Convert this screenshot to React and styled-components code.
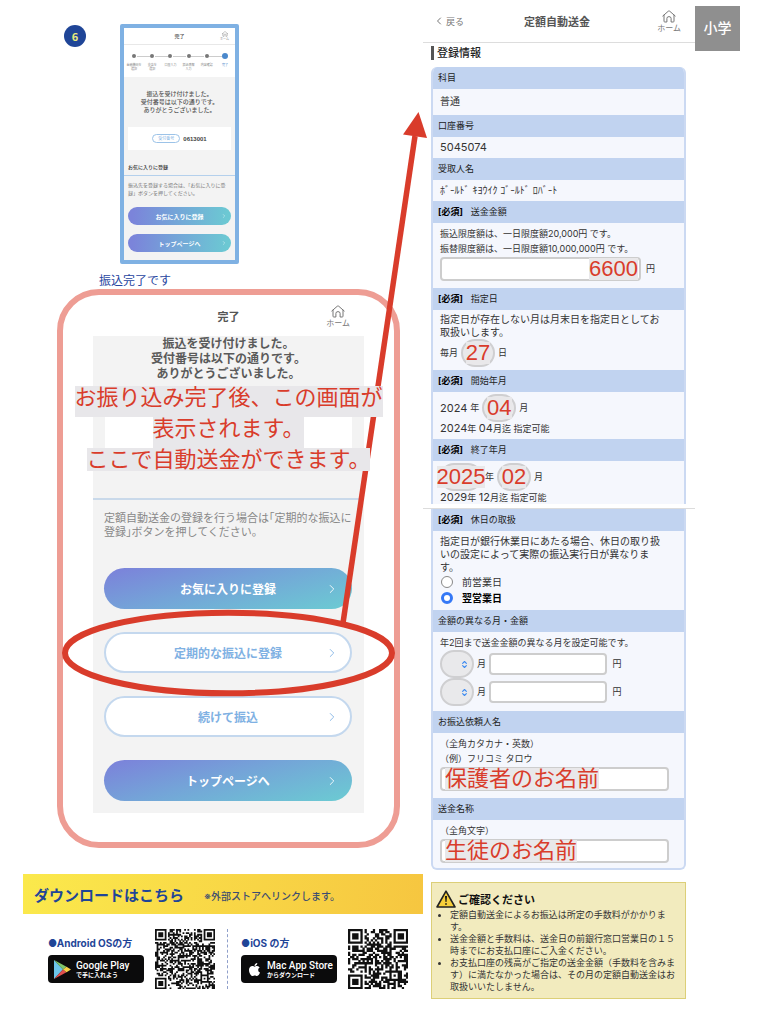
import React from 'react';
import styled, { createGlobalStyle, css } from 'styled-components';
import { ChevronRight, ChevronLeft, ChevronsUpDown } from 'lucide-react';
import { FaApple } from 'react-icons/fa';

const red = '#d93c2b';
const sky = '#7fb1e3';
const navy = '#1f4597';
const jp = '"Noto Sans CJK JP", sans-serif';

const GlobalStyle = createGlobalStyle`
  * {
    box-sizing: border-box;
  }

  body {
    margin: 0;
    background: #fff;
    color: #333;
    font-family: "Inter", ${jp};
  }

  h1, h2, h3, p, ul {
    margin: 0;
    padding: 0;
    font-weight: normal;
  }

  button, input, select {
    font: inherit;
    margin: 0;
  }
`;

const Page = styled.main`
  position: relative;
  display: grid;
  grid-template-columns: minmax(0, 423fr) minmax(0, 345fr);
  align-items: start;
  min-height: 100vh;
`;

const Arrow = styled.svg`
  position: absolute;
  top: 0;
  left: 0;
  width: 100%;
  height: 1024px;
  pointer-events: none;
`;

const Home = styled.a`
  display: flex;
  flex-direction: column;
  align-items: center;
  justify-self: end;
  color: #777;
  font-size: ${props => props.$tiny ? 3 : 8}px;
  line-height: ${props => props.$tiny ? 4 : 10}px;
  text-decoration: none;

  svg {
    width: ${props => props.$tiny ? 6 : 14}px;
    height: ${props => props.$tiny ? 6 : 13}px;
  }
`;

const HomeLink = ({ tiny }) => (
  <Home href="#home" $tiny={tiny}>
    <svg viewBox="0 0 14 13" fill="none" stroke="currentColor" strokeWidth="1" strokeLinejoin="round" strokeLinecap="round">
      <path d="M.8 6 6.3 1.2Q7 .7 7.7 1.2L13.2 6M2 5.2V11.2Q2 12 2.8 12H4.9V8.4Q4.9 6.6 7 6.6T9.1 8.4V12H11.2Q12 12 12 11.2V5.2" />
    </svg>
    ホーム
  </Home>
);

/* ---- left column ---- */

const Left = styled.div`
  min-width: 0;
  padding-top: 24px;
`;

const StepRow = styled.div`
  display: flex;
  align-items: flex-start;
  gap: 34px;
  padding-left: 64px;
`;

const StepBadge = styled.span`
  width: 22px;
  height: 22px;
  margin-top: 1px;
  border-radius: 50%;
  background: ${navy};
  color: #e9ec7c;
  font: bold 11px/22px ${jp};
  text-align: center;
`;

const MiniPhone = styled.section`
  width: 119px;
  height: 240px;
  border: 4px solid ${sky};
  border-radius: 2px;
  background: #f3f3f3;
`;

const MiniHeader = styled.header`
  display: grid;
  grid-template-columns: 1fr auto 1fr;
  align-items: center;
  height: 17px;
  padding: 0 6px;
  border-bottom: 1px solid #e8e8e8;
  background: #fff;
  font-size: 5px;
  line-height: 6px;

  h2 {
    grid-column: 2;
    color: #555;
    font-size: 5px;
    font-weight: 500;
  }
`;

const MiniSteps = styled.ol`
  display: grid;
  grid-template-columns: repeat(6, 1fr);
  height: 32px;
  margin: 0;
  padding: 8px 1px 0;
  background: #fff;
  list-style: none;
`;

const MiniStep = styled.li`
  position: relative;
  color: ${props => props.$active ? '#4a88cc' : '#888'};
  font-size: 3px;
  line-height: 4px;
  text-align: center;
  white-space: pre-line;

  &::before {
    content: '';
    display: block;
    width: ${props => props.$active ? 6 : 4}px;
    height: ${props => props.$active ? 6 : 4}px;
    margin: ${props => props.$active ? '0 auto 4px' : '1px auto 5px'};
    border-radius: 50%;
    background: ${props => props.$active ? '#4a88cc' : '#777'};
  }

  &:not(:last-child)::after {
    content: '';
    position: absolute;
    top: 3px;
    left: 65%;
    width: 70%;
    border-top: 1px solid #ccc;
  }
`;

const MiniMessage = styled.p`
  padding: 13px 0;
  color: #555;
  font-size: 6px;
  font-weight: 500;
  line-height: 8px;
  text-align: center;
`;

const MiniNumber = styled.div`
  display: flex;
  align-items: center;
  justify-content: center;
  gap: 3px;
  height: 23px;
  margin: 0 4px;
  background: #fff;
  color: #444;
  font: bold 6px "Liberation Sans", sans-serif;

  span {
    width: 28px;
    border: 1px solid #9cc3e8;
    border-radius: 5px;
    color: ${sky};
    font: 4px/7px ${jp};
    text-align: center;
  }
`;

const MiniTitle = styled.h3`
  padding: 13px 4px 4px;
  border-bottom: 1px solid #b4d0ec;
  font-size: 5px;
  font-weight: 500;
  line-height: 8px;
`;

const MiniText = styled.p`
  padding: 5px 4px 10px;
  color: #777;
  font-size: 5px;
  line-height: 8px;
`;

const MiniButtons = styled.div`
  display: grid;
  gap: 9px;
  padding: 0 4px;
`;

const Caption = styled.p`
  padding: 8px 0 0 99px;
  color: #2745a0;
  font-size: 12px;
  line-height: 17px;
`;

const Frame = styled.section`
  margin: 0 23px 0 57px;
  padding: 0 30px 29px;
  border: 6px solid #ee9d94;
  border-radius: 42px;
`;

const FrameHeader = styled.header`
  display: grid;
  grid-template-columns: 1fr auto 1fr;
  align-items: center;
  height: 41px;
  padding: 2px 14px 0;

  h2 {
    grid-column: 2;
    color: #555;
    font-size: 11px;
    font-weight: bold;
    line-height: 20px;
  }
`;

const Screen = styled.div`
  position: relative;
  padding-bottom: 12px;
  background: #f3f3f3;
`;

const Message = styled.p`
  color: #5a5a5a;
  font-size: 12px;
  font-weight: bold;
  line-height: 15px;
  text-align: center;
`;

const NumberBox = styled.div`
  height: 47px;
  margin: 20px 12px 50px;
  background: #fff;
`;

// handwritten style remarks that sit on top of the screen
const Remark = styled.p`
  position: absolute;
  z-index: 2;
  top: 50px;
  left: 50%;
  width: max-content;
  transform: translateX(-50%);
  color: ${red};
  font-size: 22px;
  line-height: 23px;
  text-align: center;

  span {
    display: table;
    margin: 0 auto;
    padding-bottom: 8px;
    background: #e8e7ea;
  }

  span:last-child {
    padding-bottom: 0;
  }
`;

const Help = styled.p`
  padding: 11px 0 29px 11px;
  border-top: 2px solid #c9d9ea;
  color: #888;
  font-size: 11px;
  line-height: 14px;
  font-feature-settings: 'halt';
`;

const ButtonStack = styled.div`
  display: grid;
  gap: 23px;
  padding: 0 12px 0 11px;
`;

const PillButton = styled.button`
  display: flex;
  align-items: center;
  justify-content: center;
  position: relative;
  width: 100%;
  height: ${props => props.$mini ? 18 : 41}px;
  padding: 0;
  border: 0;
  border-radius: 21px;
  background: linear-gradient(${props => props.$mini ? '95deg' : '165deg'}, #7b84da 5%, #74a4d8 45%, #6cc8d3 95%);
  color: #fff;
  font-size: ${props => props.$mini ? 6 : 12}px;
  font-weight: bold;

  svg {
    position: absolute;
    right: ${props => props.$mini ? 4 : 13}px;
    stroke-width: 1.5px;
  }

  ${props => props.$outline && css`
    border: 2px solid #c4d8ee;
    background: #fff;
    color: ${sky};

    svg {
      right: 11px;
    }
  `}
`;

const Banner = styled.h2`
  display: flex;
  align-items: center;
  gap: 20px;
  height: 40px;
  margin: 26px 0 0 23px;
  padding-left: 11px;
  background: linear-gradient(100deg, #fbe94c, #f6c640);
  color: ${navy};
  font-size: 15px;
  font-weight: bold;

  small {
    padding-top: 2px;
    color: #3d4d70;
    font-size: 10px;
    font-weight: 500;
  }
`;

const Downloads = styled.div`
  display: flex;
  padding: 15px 0 0 48px;
`;

const Download = styled.div`
  display: flex;
  gap: 11px;

  & + & {
    margin-left: 12px;
    padding-left: 13px;
    border-left: 1px dashed #8f9fca;
  }
`;

const Platform = styled.p`
  padding: 6px 0 3px;
  color: ${navy};
  font-size: 10px;
  font-weight: bold;
  line-height: 17px;
  white-space: nowrap;
`;

const StoreLink = styled.a`
  display: flex;
  align-items: center;
  gap: 5px;
  width: 96px;
  height: 28px;
  padding-left: 6px;
  border-radius: 4px;
  background: #0b0b0c;
  color: #fff;
  font: 500 10px/11px Roboto, sans-serif;
  text-decoration: none;
  white-space: nowrap;

  small {
    display: block;
    font: bold 6px/8px ${jp};
  }
`;

// ---- QR codes ----

const isFinder = (x, y) => {
  const ring = Math.max(Math.abs(x - 3), Math.abs(y - 3));
  return ring === 3 || ring < 2;
};

const qrPath = (size, seed) => {
  let state = seed;
  let d = '';

  for (let y = 0; y < size; y++) {
    for (let x = 0; x < size; x++) {
      state ^= state << 13;
      state ^= state >>> 17;
      state ^= state << 5;
      let on = (state >>> 8) % 100 < 52;
      const fx = x >= size - 8 ? size - 1 - x : x;
      const fy = y >= size - 8 ? size - 1 - y : y;
      const corner = fx < 8 && fy < 8 && !(x >= size - 8 && y >= size - 8);
      const ring = Math.max(Math.abs(x - size + 7), Math.abs(y - size + 7));

      if (corner) on = fx < 7 && fy < 7 && isFinder(fx, fy);
      else if (x === 6 || y === 6) on = (x + y) % 2 === 0;
      else if (ring < 3) on = ring !== 1;

      // a little overlap, so no hairline shows between neighbours
      if (on) d += `M${x} ${y}h1.1v1.1h-1.1z`;
    }
  }

  return d;
};

const Qr = ({ size, seed }) => (
  <svg width="60" height="60" viewBox={`0 0 ${size} ${size}`} role="img" aria-label="QR">
    <path d={qrPath(size, seed)} fill="#111" />
  </svg>
);

/* ---- right column ---- */

const Right = styled.div`
  display: grid;
  grid-template-columns: minmax(0, 1fr) 45px;
  align-items: start;
  min-width: 0;
  padding-right: 28px;
`;

const SchoolTag = styled.div`
  height: 45px;
  margin-top: 6px;
  background: #8f8f8f;
  color: #fff;
  font-size: 14px;
  font-weight: 500;
  line-height: 44px;
  text-align: center;
`;

const FormHeader = styled.header`
  display: grid;
  grid-template-columns: 1fr auto 1fr;
  align-items: center;
  height: 43px;
  padding: 0 14px 0 10px;
  border-bottom: 1px solid #ddd;

  h1 {
    color: #555;
    font-size: 11px;
    font-weight: bold;
  }
`;

const Back = styled.a`
  display: flex;
  align-items: center;
  gap: 1px;
  color: #777;
  font-size: 9px;
  text-decoration: none;
`;

const Section = styled.div`
  padding: 0 9px 0 8px;
`;

const SectionTitle = styled.h2`
  margin: 3px 0 7px;
  padding-left: 3px;
  border-left: 3px solid #555;
  color: #222;
  font-size: 11px;
  font-weight: 500;
  line-height: 14px;
`;

const Panel = styled.div`
  overflow: hidden;
  border: solid #cbd9f2;
  border-width: ${props => props.$end ? '0 2px 2px' : '0 2px'};
  border-radius: ${props => props.$end ? '0 0 6px 6px' : '6px 6px 0 0'};
  background: #f5f7fd;
`;

const Split = styled.hr`
  height: 5px;
  margin: 0;
  border: 0;
  border-bottom: 1px solid #dcdcdc;
`;

const Label = styled.h3`
  display: flex;
  gap: 8px;
  padding-left: 5px;
  background: #c1d3f0;
  color: #222;
  font-size: 9px;
  line-height: 22px;
`;

const Must = styled.strong`
  color: #000;
`;

const Body = styled.div`
  padding: ${props => props.$pad || '3px 7px 7px'};
  font-size: ${props => props.$big ? 10 : 9}px;
  line-height: ${props => props.$line || 15}px;
`;

const Num = styled.span`
  font-size: 11px;
`;

const Row = styled.div`
  display: flex;
  align-items: center;
  gap: 3px;
  height: 28px;
  font-size: 9px;
  line-height: 12px;
`;

const FieldRow = styled(Row)`
  gap: 5px;
  height: 25px;
  padding-top: 1px;
`;

const Holder = styled.span`
  display: inline-flex;
  align-items: center;
  justify-content: center;
  position: relative;
  flex: none;
  width: ${props => props.$width};
  color: #3f8cf0;

  svg {
    position: absolute;
    right: 5px;
    pointer-events: none;
  }
`;

const TextInput = styled.input`
  width: 100%;
  height: ${props => props.$small ? 22 : 24}px;
  padding: 0 4px;
  border: 2px solid #cdcdcd;
  border-radius: 4px;
  background: #fff;
`;

const Select = styled.select`
  appearance: none;
  width: 100%;
  height: 28px;
  border: 2px solid #cfcfd1;
  border-radius: 14px;
  background: #e9e9eb;
`;

const Mark = styled.span`
  position: absolute;
  ${props => props.$side && `${props.$side}: ${props.$side === 'left' ? 5 : 3}px;`}
  background: #e9e8ea;
  color: ${red};
  font: 22px/22px "Liberation Sans", ${jp};
  pointer-events: none;
  white-space: nowrap;
`;

const Choice = styled.label`
  display: flex;
  align-items: center;
  gap: 9px;
  padding-left: 1px;
  color: ${props => props.$picked ? '#000' : '#333'};
  font-weight: ${props => props.$picked ? 'bold' : 'normal'};
  line-height: 16px;

  input {
    appearance: none;
    width: 12px;
    height: 12px;
    border: 1px solid #888;
    border-radius: 50%;
    background: #fff;
  }

  input:checked {
    border: 3px solid #3478f6;
  }
`;

const Notice = styled.section`
  margin-top: 12px;
  padding: 6px 4px 5px;
  border: 1px solid #dccf78;
  background: #f2ebbe;
`;

const NoticeTitle = styled.h3`
  display: flex;
  align-items: center;
  gap: 2px;
  height: 20px;
  color: #111;
  font-size: 11px;
  font-weight: bold;
`;

const NoticeList = styled.ul`
  padding-left: 14px;
  font-size: 9px;
  line-height: 12px;

  li::marker {
    font-size: 8px;
  }
`;

const steps = ['金融機関を\n選択', '支店を\n選択', '口座入力', '振込情報\n入力', '内容確認', '完了'];

const PickSelect = ({ label, value, width = '34px' }) => (
  <Holder $width={width}>
    <Select aria-label={label} />
    {value ? <Mark>{value}</Mark> : <ChevronsUpDown size={9} strokeWidth={3} />}
  </Holder>
);

const ExtraMonth = ({ n }) => (
  <Row>
    <PickSelect label={`月 ${n}`} />
    月
    <Holder $width="118px">
      <TextInput $small aria-label={`金額 ${n}`} />
    </Holder>
    <span>&nbsp;円</span>
  </Row>
);

const MiniScreen = () => (
  <MiniPhone>
    <MiniHeader>
      <h2>完了</h2>
      <HomeLink tiny />
    </MiniHeader>
    <MiniSteps>
      {steps.map((step, i) => (
        <MiniStep key={step} $active={i === 5}>{step}</MiniStep>
      ))}
    </MiniSteps>
    <MiniMessage>
      振込を受け付けました。<br />
      受付番号は以下の通りです。<br />
      ありがとうございました。
    </MiniMessage>
    <MiniNumber><span>受付番号</span>0613001</MiniNumber>
    <MiniTitle>お気に入りに登録</MiniTitle>
    <MiniText>振込先を登録する場合は、「お気に入りに登<br />録」ボタンを押してください。</MiniText>
    <MiniButtons>
      <PillButton $mini>お気に入りに登録<ChevronRight size={6} /></PillButton>
      <PillButton $mini>トップページへ<ChevronRight size={6} /></PillButton>
    </MiniButtons>
  </MiniPhone>
);

const CompleteScreen = () => (
  <Frame>
    <FrameHeader>
      <h2>完了</h2>
      <HomeLink />
    </FrameHeader>
    <Screen>
      <Message>
        振込を受け付けました。<br />
        受付番号は以下の通りです。<br />
        ありがとうございました。
      </Message>
      <NumberBox />
      <Remark>
        <span>お振り込み完了後、この画面が</span>
        <span>表示されます。</span>
        <span>ここで自動送金ができます。</span>
      </Remark>
      <Help>定額自動送金の登録を行う場合は「定期的な振込に<br />登録」ボタンを押してください。</Help>
      <ButtonStack>
        <PillButton>お気に入りに登録<ChevronRight size={14} /></PillButton>
        <PillButton $outline>定期的な振込に登録<ChevronRight size={14} /></PillButton>
        <PillButton $outline>続けて振込<ChevronRight size={14} /></PillButton>
        <PillButton>トップページへ<ChevronRight size={14} /></PillButton>
      </ButtonStack>
    </Screen>
  </Frame>
);

const App = () => (
  <Page>
    <GlobalStyle />
    <Left>
      <StepRow>
        <StepBadge>6</StepBadge>
        <MiniScreen />
      </StepRow>
      <Caption>振込完了です</Caption>
      <CompleteScreen />
      <Banner>ダウンロードはこちら <small>※外部ストアへリンクします。</small></Banner>
      <Downloads>
        <Download>
          <div>
            <Platform>●Android OSの方</Platform>
            <StoreLink href="#google-play">
              <svg width="17" height="19" viewBox="0 0 17 19">
                <path d="M0 0v19l9-9.5z" fill="#6cc5ea" />
                <path d="M0 0l12.5 6.8L9 9.5z" fill="#7fc66b" />
                <path d="M0 19l12.5-6.8L9 9.5z" fill="#e0514f" />
                <path d="M12.5 6.8L17 9.5l-4.5 2.7L9 9.5z" fill="#f7d047" />
              </svg>
              <span>Google Play<small>で手に入れよう</small></span>
            </StoreLink>
          </div>
          <Qr size={37} seed={4711} />
        </Download>
        <Download>
          <div>
            <Platform>●iOS の方</Platform>
            <StoreLink href="#app-store">
              <FaApple size={15} />
              <span>Mac App Store<small>からダウンロード</small></span>
            </StoreLink>
          </div>
          <Qr size={29} seed={90210} />
        </Download>
      </Downloads>
    </Left>

    <Right>
      <div>
        <FormHeader>
          <Back href="#back"><ChevronLeft size={12} />戻る</Back>
          <h1>定額自動送金</h1>
          <HomeLink />
        </FormHeader>
        <Section>
          <SectionTitle>登録情報</SectionTitle>
          <Panel>
            <Label>科目</Label>
            <Body $big $pad="6px 7px 7px" $line={13}>普通</Body>
            <Label>口座番号</Label>
            <Body $pad="4px 7px" $line={13}><Num>5045074</Num></Body>
            <Label>受取人名</Label>
            <Body $big $pad="4px 7px" $line={13}>ﾎﾞ-ﾙﾄﾞ ｷﾖｳｲｸ ｺﾞ-ﾙﾄﾞ ﾛﾊﾞ-ﾄ</Body>
            <Label><Must>[必須]</Must>送金金額</Label>
            <Body>
              <p>振込限度額は、一日限度額20,000円 です。</p>
              <p>振替限度額は、一日限度額10,000,000円 です。</p>
              <FieldRow>
                <Holder $width="201px">
                  <TextInput aria-label="送金金額" />
                  <Mark $side="right">6600</Mark>
                </Holder>
                円
              </FieldRow>
            </Body>
            <Label><Must>[必須]</Must>指定日</Label>
            <Body $big $pad="3px 7px" $line={13}>
              <p>指定日が存在しない月は月末日を指定日としてお<br />取扱いします。</p>
              <Row>毎月<PickSelect label="指定日" value="27" />日</Row>
            </Body>
            <Label><Must>[必須]</Must>開始年月</Label>
            <Body $pad="2px 7px 4px" $line={12}>
              <Row><Num>2024</Num>年<PickSelect label="開始月" value="04" />月</Row>
              <p><Num>2024</Num>年 <Num>04</Num>月迄 指定可能</p>
            </Body>
            <Label><Must>[必須]</Must>終了年月</Label>
            <Body $pad="2px 7px 0" $line={12}>
              <Row>
                <PickSelect label="終了年" value="2025" width="42px" />年
                <PickSelect label="終了月" value="02" />月
              </Row>
              <p><Num>2029</Num>年 <Num>12</Num>月迄 指定可能</p>
            </Body>
          </Panel>
        </Section>
        <Split />
        <Section>
          <Panel $end>
            <Label><Must>[必須]</Must>休日の取扱</Label>
            <Body $big $pad="4px 7px" $line={13}>
              <p>
                指定日が銀行休業日にあたる場合、休日の取り扱<br />
                いの設定によって実際の振込実行日が異なりま<br />
                す。
              </p>
              <Choice><input type="radio" name="holiday" />前営業日</Choice>
              <Choice $picked><input type="radio" name="holiday" defaultChecked />翌営業日</Choice>
            </Body>
            <Label>金額の異なる月・金額</Label>
            <Body $pad="3px 7px 5px">
              <p>年2回まで送金金額の異なる月を設定可能です。</p>
              <ExtraMonth n={1} />
              <ExtraMonth n={2} />
            </Body>
            <Label>お振込依頼人名</Label>
            <Body>
              <p>（全角カタカナ・英数）</p>
              <p>（例）フリコミ タロウ</p>
              <FieldRow>
                <Holder $width="229px">
                  <TextInput aria-label="お振込依頼人名" />
                  <Mark $side="left">保護者のお名前</Mark>
                </Holder>
              </FieldRow>
            </Body>
            <Label>送金名称</Label>
            <Body $pad="3px 7px 5px">
              <p>（全角文字）</p>
              <FieldRow>
                <Holder $width="229px">
                  <TextInput aria-label="送金名称" />
                  <Mark $side="left">生徒のお名前</Mark>
                </Holder>
              </FieldRow>
            </Body>
          </Panel>
          <Notice>
            <NoticeTitle>
              <svg width="20" height="18" viewBox="0 0 20 18">
                <path d="M10 1.2 19 17H1z" fill="#f7cf3a" stroke="#222" strokeWidth="1.6" strokeLinejoin="round" />
                <path d="M9 6h2l-.5 6h-1zM9.2 13.2h1.6v1.6H9.2z" fill="#111" />
              </svg>
              ご確認ください
            </NoticeTitle>
            <NoticeList>
              <li>定額自動送金によるお振込は所定の手数料がかかりま<br />す。</li>
              <li>送金金額と手数料は、送金日の前銀行窓口営業日の１５<br />時までにお支払口座にご入金ください。</li>
              <li>お支払口座の残高がご指定の送金金額（手数料を含みま<br />す）に満たなかった場合は、その月の定額自動送金はお<br />取扱いいたしません。</li>
            </NoticeList>
          </Notice>
        </Section>
      </div>
      <SchoolTag>小学</SchoolTag>
    </Right>

    <Arrow viewBox="0 0 768 1024" preserveAspectRatio="none">
      <ellipse cx="228.5" cy="653" rx="163.5" ry="40.3" fill="none" stroke={red} strokeWidth="6" />
      <path d="M343 623 415 136" stroke={red} strokeWidth="5.5" />
      <path d="M418.5 112 427 138 403 134.5z" fill={red} />
    </Arrow>
  </Page>
);

export default App;
